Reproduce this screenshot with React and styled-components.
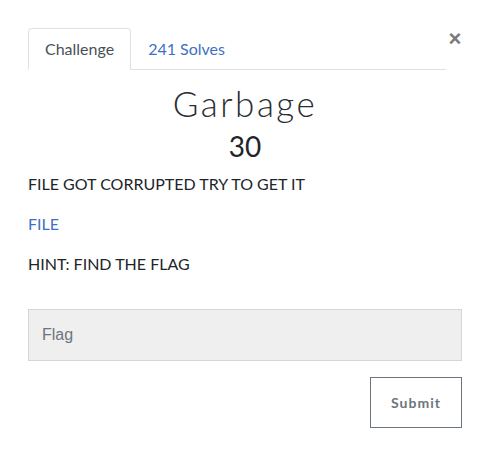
import React from 'react'
import styled, {createGlobalStyle} from 'styled-components'

const Global = createGlobalStyle`
	body {
		margin: 0;
		background: #fff;
		font-family: Lato, "Open Sans", sans-serif;
		color: #212529;
	}
`

const Modal = styled.div`
	padding: 28px 27px 20px 28px;
`

const Header = styled.div`
	display: flex;
	align-items: flex-start;
`

const Tabs = styled.ul`
	display: flex;
	flex: 1;
	list-style: none;
	margin: 0;
	padding: 0;
	border-bottom: 1px solid #dee2e6;
`

const Tab = styled.li`
	margin-bottom: -1px;
	padding: 8px 16px;
	font-size: 16px;
	line-height: 24px;
	border: 1px solid ${p => (p.active ? '#dee2e6' : 'transparent')};
	border-bottom-color: ${p => (p.active ? '#fff' : 'transparent')};
	border-radius: 4px 4px 0 0;
	background: ${p => (p.active ? '#fff' : 'transparent')};
	color: ${p => (p.active ? '#495057' : '#3f6fc4')};
`

const Close = styled.button`
	border: none;
	background: none;
	padding: 0;
	margin: 2px 0 0 2px;
	width: 14px;
	font-family: "Liberation Sans", sans-serif;
	font-size: 22px;
	font-weight: 700;
	line-height: 18px;
	color: #7a7a7a;
`

const Title = styled.h2`
	margin: 13px 0 0;
	text-align: center;
	font-family: Lato, sans-serif;
	font-weight: 300;
	font-size: 35px;
	letter-spacing: 2.5px;
	line-height: 40px;
	color: #2a2d31;
`

const Value = styled.h3`
	margin: 5px 0 8px;
	text-align: center;
	font-weight: 400;
	font-size: 28px;
	line-height: 36px;
	color: #212529;
`

const Para = styled.p`
	margin: 0 0 16px;
	font-size: 16px;
	line-height: 24px;
	color: #212529;
`

const FileLink = styled.a`
	color: #3f6fc4;
	text-decoration: none;
`

const Form = styled.form`
	display: flex;
	flex-direction: column;
	align-items: flex-end;
	gap: 16px;
	margin-top: 33px;
`

const Input = styled.input`
	box-sizing: border-box;
	width: 100%;
	height: 52px;
	padding: 0 13px;
	border: 1px solid #d4d6da;
	background: #efefef;
	font-family: "Liberation Sans", Arial, sans-serif;
	font-size: 16px;
	color: #495057;
	&::placeholder {
		color: #6c757d;
	}
`

const Submit = styled.button`
	box-sizing: border-box;
	width: 92px;
	height: 51px;
	border: 1px solid #6c757d;
	background: #fff;
	font-family: Lato, sans-serif;
	font-weight: 700;
	font-size: 14px;
	letter-spacing: 1px;
	color: #6c757d;
`

const App = () => (
	<Modal>
		<Global />
		<Header>
			<Tabs>
				<Tab active>Challenge</Tab>
				<Tab>241 Solves</Tab>
			</Tabs>
			<Close>×</Close>
		</Header>
		<Title>Garbage</Title>
		<Value>30</Value>
		<Para>FILE GOT CORRUPTED TRY TO GET IT</Para>
		<Para>
			<FileLink href="#">FILE</FileLink>
		</Para>
		<Para>HINT: FIND THE FLAG</Para>
		<Form onSubmit={e => e.preventDefault()}>
			<Input placeholder="Flag" />
			<Submit>Submit</Submit>
		</Form>
	</Modal>
)

export default App
